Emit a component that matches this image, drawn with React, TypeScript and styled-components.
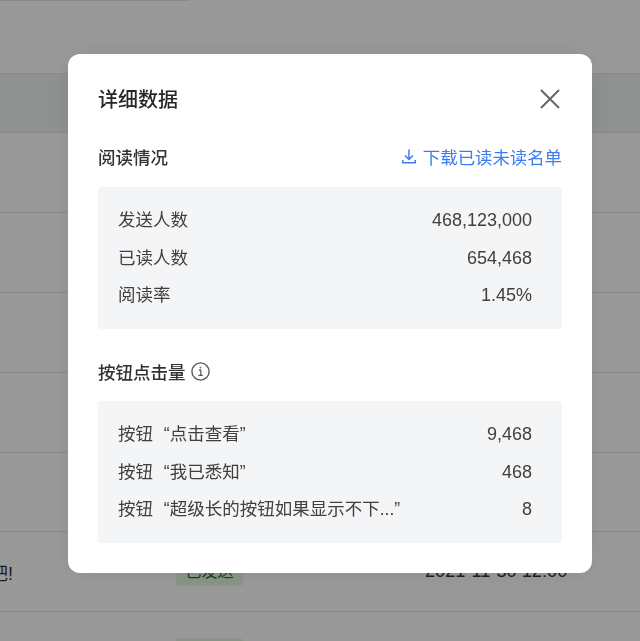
import styled, { createGlobalStyle } from 'styled-components';

const GlobalStyle = createGlobalStyle`
  html, body {
    margin: 0;
    height: 641px;
    overflow: hidden;
    background: #fff;
    font-family: "Liberation Sans", "Noto Sans CJK SC", sans-serif;
  }
`;

const Page = styled.div`
  height: 641px;
  overflow: hidden;
`;

const TopEdge = styled.div`
  width: 190px;
  height: 1px;
  background: #e6e6e6;
`;

const Spacer = styled.div`
  height: 72px;
`;

const HeadRow = styled.div`
  height: 58px;
  background: #eef1f0;
  border-top: 1px solid #e6e6e6;
  border-bottom: 1px solid #e6e6e6;
`;

const Row = styled.div`
  box-sizing: border-box;
  height: 79.9px;
  display: grid;
  grid-template-columns: 176px 249px 1fr;
  align-items: center;
  border-bottom: 1px solid #e6e6e6;
  font-size: 18.2px;
  color: #333;
`;

const Message = styled.div`
  width: 13px;
  overflow: hidden;
  display: flex;
  justify-content: flex-end;
  white-space: nowrap;
`;

const Tag = styled.div`
  width: 67px;
  height: 28px;
  border-radius: 4px;
  background: #e3f8df;
  color: #2f6b35;
  font-size: 16px;
  line-height: 28px;
  text-align: center;
`;

const Overlay = styled.div`
  position: fixed;
  inset: 0;
  background: rgba(0, 0, 0, 0.4);
  padding: 54px 48px 0 68px;
`;

const Modal = styled.div`
  box-sizing: border-box;
  width: 524px;
  height: 519px;
  padding: 30px 30px;
  background: #fff;
  border-radius: 12px;
  box-shadow: 0 0 24px rgba(0, 0, 0, 0.08);
  color: #333;
`;

const ModalHeader = styled.div`
  display: flex;
  align-items: center;
  justify-content: space-between;
  height: 30px;
  margin-bottom: 30px;
`;

const ModalTitle = styled.h2`
  margin: 0;
  padding-top: 2px;
  font-size: 20px;
  font-weight: 500;
  line-height: 30px;
  color: #262626;
`;

const CloseButton = styled.button`
  display: flex;
  padding: 0;
  margin-right: 1px;
  border: 0;
  background: none;
`;

const SectionHeader = styled.div<{ $spaced?: boolean }>`
  display: flex;
  align-items: center;
  justify-content: space-between;
  height: 24px;
  margin-top: ${(props) => (props.$spaced ? '30px' : '0')};
  margin-bottom: ${(props) => (props.$spaced ? '18px' : '19px')};
`;

const SectionTitle = styled.div`
  display: flex;
  align-items: center;
  gap: 5px;
  font-size: 17.5px;
  font-weight: 500;
  color: #333;
`;

const DownloadLink = styled.a`
  display: flex;
  align-items: center;
  gap: 7px;
  font-size: 17.4px;
  color: #3d7bf2;
`;

const StatBox = styled.div`
  padding: 15px 30px 14.5px 20px;
  background: #f4f5f7;
  border-radius: 4px;
`;

const StatRow = styled.div`
  display: flex;
  justify-content: space-between;
  height: 37.5px;
  line-height: 37.5px;
  font-size: 17.5px;
  color: #404040;
`;

const StatLabel = styled.span`
  word-spacing: 6px;
`;

const StatValue = styled.span`
  font-size: 18px;
`;

const readStats = [
  ['发送人数', '468,123,000'],
  ['已读人数', '654,468'],
  ['阅读率', '1.45%'],
];

const clickStats = [
  ['按钮 “点击查看”', '9,468'],
  ['按钮 “我已悉知”', '468'],
  ['按钮 “超级长的按钮如果显示不下...”', '8'],
];

const StatList = ({ items }: { items: string[][] }) => (
  <StatBox>
    {items.map(([label, value]) => (
      <StatRow key={label}>
        <StatLabel>{label}</StatLabel>
        <StatValue>{value}</StatValue>
      </StatRow>
    ))}
  </StatBox>
);

const App = () => {
  return (
    <>
      <GlobalStyle />
      <Page>
        <TopEdge />
        <Spacer />
        <HeadRow />
        <Row />
        <Row />
        <Row />
        <Row />
        <Row />
        <Row>
          <Message>吧!</Message>
          <Tag>已发送</Tag>
          <span>2021-11-30 12:00</span>
        </Row>
        <Row>
          <span />
          <Tag>已发送</Tag>
          <span />
        </Row>
      </Page>
      <Overlay>
        <Modal>
          <ModalHeader>
            <ModalTitle>详细数据</ModalTitle>
            <CloseButton aria-label="close">
              <svg width="22" height="22" viewBox="0 0 22 22" fill="none" stroke="#666" strokeWidth="2">
                <path d="M2 2l18 18M20 2L2 20" />
              </svg>
            </CloseButton>
          </ModalHeader>

          <SectionHeader>
            <SectionTitle>阅读情况</SectionTitle>
            <DownloadLink>
              <svg width="14" height="15" viewBox="0 0 14 15" fill="none" stroke="#3d7bf2" strokeWidth="1.5">
                <path d="M7 0.5v9.5M3 6.5L7 10.5l4-4M0.8 11v2.8h12.4V11" />
              </svg>
              下载已读未读名单
            </DownloadLink>
          </SectionHeader>
          <StatList items={readStats} />

          <SectionHeader $spaced>
            <SectionTitle>
              按钮点击量
              <svg width="19" height="19" viewBox="0 0 19 19" fill="none" stroke="#555" strokeWidth="1.4">
                <circle cx="9.5" cy="9.5" r="8.6" />
                <path d="M7.8 8.2h2v5M7.4 13.4h4.4" strokeWidth="1.2" />
                <circle cx="9.5" cy="5.6" r="0.5" strokeWidth="1" />
              </svg>
            </SectionTitle>
          </SectionHeader>
          <StatList items={clickStats} />
        </Modal>
      </Overlay>
    </>
  );
};

export default App;
